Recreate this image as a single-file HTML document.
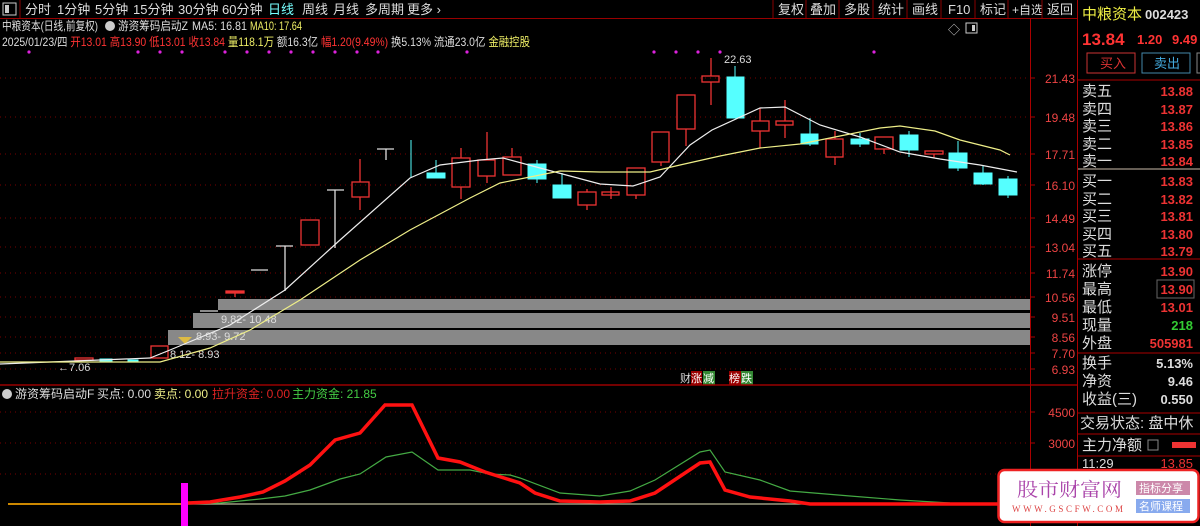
<!DOCTYPE html><html><head><meta charset="utf-8"><style>
body{margin:0;width:1200px;height:526px;background:#000;overflow:hidden;font-family:"Liberation Sans","Noto Sans CJK SC",sans-serif;position:relative}
</style></head><body>
<svg width="1200" height="526" style="position:absolute;left:0;top:0" font-family="Liberation Sans, Noto Sans CJK SC, sans-serif">
<rect x="3" y="3" width="13" height="12" fill="none" stroke="#ccc"/><rect x="5" y="5" width="4" height="8" fill="#ccc"/>
<line x1="20" y1="0" x2="20" y2="18" stroke="#800"/>
<g font-size="13" fill="#ddd">
<text x="25" y="14">分时</text><text x="57" y="14">1分钟</text><text x="95" y="14">5分钟</text><text x="133" y="14">15分钟</text><text x="178" y="14">30分钟</text><text x="222" y="14">60分钟</text><text x="268" y="14" fill="#7ff">日线</text><text x="302" y="14">周线</text><text x="333" y="14">月线</text><text x="365" y="14">多周期</text><text x="407" y="14">更多 ›</text>
<text x="778" y="14">复权</text><text x="810" y="14">叠加</text><text x="844" y="14">多股</text><text x="878" y="14">统计</text><text x="912" y="14">画线</text><text x="948" y="14">F10</text><text x="980" y="14">标记</text><text x="1012" y="14" font-size="12">+自选</text><text x="1047" y="14">返回</text>
</g>
<g stroke="#800"><line x1="773" y1="0" x2="773" y2="18"/><line x1="806" y1="0" x2="806" y2="18"/><line x1="839" y1="0" x2="839" y2="18"/><line x1="873" y1="0" x2="873" y2="18"/><line x1="907" y1="0" x2="907" y2="18"/><line x1="941" y1="0" x2="941" y2="18"/><line x1="975" y1="0" x2="975" y2="18"/><line x1="1008" y1="0" x2="1008" y2="18"/><line x1="1042" y1="0" x2="1042" y2="18"/></g>
<line x1="0" y1="18.5" x2="1077" y2="18.5" stroke="#900"/>
<g font-size="12">
<text x="2" y="30" fill="#ddd" textLength="96" lengthAdjust="spacingAndGlyphs">中粮资本(日线,前复权)</text><circle cx="110" cy="26" r="5" fill="#ccc"/><text x="118" y="30" fill="#ddd" textLength="70" lengthAdjust="spacingAndGlyphs">游资筹码启动Z</text><text x="192" y="30" fill="#ddd" textLength="55" lengthAdjust="spacingAndGlyphs">MA5: 16.81</text><text x="250" y="30" fill="#ee6" textLength="52" lengthAdjust="spacingAndGlyphs">MA10: 17.64</text>
<text x="2" y="46" font-size="12" textLength="528" lengthAdjust="spacingAndGlyphs"><tspan fill="#ddd">2025/01/23/四 </tspan><tspan fill="#f33">开13.01 高13.90 低13.01 收13.84 </tspan><tspan fill="#ee6">量118.1万 </tspan><tspan fill="#ddd">额16.3亿 </tspan><tspan fill="#f33">幅1.20(9.49%) </tspan><tspan fill="#ddd">换5.13% 流通23.0亿 </tspan><tspan fill="#ee6">金融控股</tspan></text>
</g>
<g fill="#d2d"><circle cx="29" cy="52" r="1.6"/><circle cx="138" cy="52" r="1.6"/><circle cx="160" cy="52" r="1.6"/><circle cx="182" cy="52" r="1.6"/><circle cx="225" cy="52" r="1.6"/><circle cx="247" cy="52" r="1.6"/><circle cx="269" cy="52" r="1.6"/><circle cx="291" cy="52" r="1.6"/><circle cx="313" cy="52" r="1.6"/><circle cx="335" cy="52" r="1.6"/><circle cx="357" cy="52" r="1.6"/><circle cx="378" cy="52" r="1.6"/><circle cx="467" cy="52" r="1.6"/><circle cx="654" cy="52" r="1.6"/><circle cx="676" cy="52" r="1.6"/><circle cx="698" cy="52" r="1.6"/><circle cx="720" cy="52" r="1.6"/><circle cx="874" cy="52" r="1.6"/></g>
<text x="948" y="34" fill="#ccc" font-size="12">◇</text><rect x="966" y="23" width="11" height="10" fill="none" stroke="#ccc"/><rect x="972" y="25" width="3" height="6" fill="#ccc"/>
<g stroke="#700" stroke-dasharray="1,4"><line x1="0" x2="1030" y1="78" y2="78"/><line x1="0" x2="1030" y1="117" y2="117"/><line x1="0" x2="1030" y1="154" y2="154"/><line x1="0" x2="1030" y1="185" y2="185"/><line x1="0" x2="1030" y1="218" y2="218"/><line x1="0" x2="1030" y1="247" y2="247"/><line x1="0" x2="1030" y1="273" y2="273"/><line x1="0" x2="1030" y1="297" y2="297"/><line x1="0" x2="1030" y1="317" y2="317"/><line x1="0" x2="1030" y1="337" y2="337"/><line x1="0" x2="1030" y1="353" y2="353"/><line x1="0" x2="1030" y1="369" y2="369"/>
<line x1="0" x2="1030" y1="412" y2="412"/><line x1="0" x2="1030" y1="443" y2="443"/><line x1="0" x2="1030" y1="474" y2="474"/></g>
<rect x="218" y="299" width="812" height="11" fill="#888"/><rect x="193" y="313" width="837" height="15" fill="#888"/><rect x="168" y="330" width="862" height="15" fill="#888"/>
<g font-size="11" fill="#ddd"><text x="221" y="323">9.82- 10.48</text><text x="196" y="340">8.93- 9.72</text><text x="170" y="358">8.12- 8.93</text><text x="58" y="371">←7.06</text><text x="724" y="63">22.63</text></g>
<path d="M178 337 L192 337 L185 344 Z" fill="#db4"/>
<g stroke="#e33" fill="none" stroke-width="1.3">
<rect x="75" y="358" width="18" height="2"/><rect x="151" y="346" width="17" height="12"/><rect x="226" y="291" width="18" height="2" fill="#e33"/><line x1="235" x2="235" y1="293" y2="297"/>
<rect x="301" y="220" width="18" height="25"/><rect x="352" y="182" width="17" height="15"/><line x1="360" x2="360" y1="159" y2="182"/><line x1="360" x2="360" y1="197" y2="210"/>
<rect x="452" y="158" width="18" height="29"/><line x1="461" x2="461" y1="148" y2="158"/><line x1="461" x2="461" y1="187" y2="199"/>
<rect x="478" y="160" width="17" height="16"/><line x1="487" x2="487" y1="132" y2="160"/><line x1="487" x2="487" y1="176" y2="183"/>
<rect x="503" y="157" width="18" height="18"/><line x1="512" x2="512" y1="148" y2="157"/>
<rect x="578" y="192" width="18" height="13"/><line x1="587" x2="587" y1="189" y2="192"/><line x1="587" x2="587" y1="205" y2="210"/>
<rect x="602" y="192" width="17" height="3"/><line x1="611" x2="611" y1="187" y2="199"/>
<rect x="627" y="168" width="18" height="27"/><line x1="636" x2="636" y1="195" y2="199"/>
<rect x="652" y="132" width="17" height="30"/><line x1="661" x2="661" y1="162" y2="166"/>
<rect x="677" y="95" width="18" height="34"/><line x1="686" x2="686" y1="129" y2="146"/>
<rect x="702" y="76" width="17" height="6"/><line x1="711" x2="711" y1="58" y2="76"/><line x1="711" x2="711" y1="82" y2="105"/>
<rect x="752" y="121" width="17" height="10"/><line x1="760" x2="760" y1="108" y2="121"/><line x1="760" x2="760" y1="131" y2="148"/>
<rect x="776" y="121" width="17" height="4"/><line x1="785" x2="785" y1="100" y2="121"/><line x1="785" x2="785" y1="125" y2="138"/>
<rect x="826" y="139" width="17" height="18"/><line x1="835" x2="835" y1="131" y2="139"/><line x1="835" x2="835" y1="157" y2="165"/>
<rect x="875" y="137" width="18" height="12"/><line x1="884" x2="884" y1="149" y2="154"/>
<rect x="925" y="151" width="18" height="3"/><line x1="934" x2="934" y1="154" y2="158"/>
</g>
<g fill="#5ff" stroke="#5ff">
<rect x="427" y="173" width="18" height="5"/><line x1="436" x2="436" y1="160" y2="173"/><line x1="411" x2="411" y1="140" y2="178"/>
<rect x="528" y="164" width="18" height="15"/><line x1="537" x2="537" y1="160" y2="183"/>
<rect x="553" y="185" width="18" height="13"/><line x1="562" x2="562" y1="173" y2="185"/>
<rect x="727" y="77" width="17" height="41"/><line x1="735" x2="735" y1="66" y2="77"/>
<rect x="801" y="134" width="17" height="10"/><line x1="810" x2="810" y1="118" y2="146"/>
<rect x="851" y="139" width="18" height="5"/><line x1="860" x2="860" y1="133" y2="147"/>
<rect x="900" y="135" width="18" height="15"/><line x1="909" x2="909" y1="131" y2="157"/>
<rect x="949" y="153" width="18" height="15"/><line x1="958" x2="958" y1="141" y2="171"/>
<rect x="974" y="173" width="18" height="11"/><line x1="983" x2="983" y1="166" y2="185"/>
<rect x="999" y="179" width="18" height="16"/><line x1="1008" x2="1008" y1="176" y2="198"/>
<rect x="100" y="359" width="12" height="2"/><rect x="128" y="360" width="10" height="2"/>
</g>
<g stroke="#ddd" stroke-width="1.3"><line x1="200" x2="218" y1="311" y2="311"/><line x1="251" x2="268" y1="270" y2="270"/><line x1="276" x2="293" y1="246" y2="246"/><line x1="285" x2="285" y1="246" y2="291"/><line x1="327" x2="344" y1="190" y2="190"/><line x1="335" x2="335" y1="190" y2="248"/><line x1="377" x2="394" y1="149" y2="149"/><line x1="386" x2="386" y1="149" y2="160"/></g>
<polyline fill="none" stroke="#eee" stroke-width="1.2" points="0,364 150,358 170,350 230,325 285,290 340,240 410,178 440,165 480,160 503,158 540,168 600,184 633,186 660,177 690,145 712,130 760,108 785,107 820,125 860,137 900,152 940,159 980,165 1017,172"/>
<polyline fill="none" stroke="#ee8" stroke-width="1.2" points="0,362 160,362 210,348 250,330 300,300 360,260 410,230 470,198 500,183 560,171 600,172 650,172 680,165 720,156 760,148 800,144 840,136 880,128 900,126 935,131 960,140 1000,150 1010,155"/>
<text x="680" y="382" font-size="11" fill="#ddd">财</text><rect x="691" y="371" width="11" height="14" fill="#900"/><text x="691" y="382" font-size="11" fill="#fff">涨</text><rect x="703" y="371" width="12" height="14" fill="#383"/><text x="703" y="382" font-size="11" fill="#fff">减</text>
<rect x="729" y="371" width="12" height="14" fill="#900"/><text x="729" y="382" font-size="11" fill="#fff">榜</text><rect x="741" y="371" width="12" height="14" fill="#383"/><text x="741" y="382" font-size="11" fill="#fff">跌</text>
<line x1="0" y1="385" x2="1077" y2="385" stroke="#900" stroke-width="1.5"/>
<circle cx="7" cy="394" r="5" fill="#ccc"/>
<g font-size="12"><text x="15" y="398" fill="#ddd">游资筹码启动F</text><text x="97" y="398" fill="#ddd">买点: 0.00</text><text x="154" y="398" fill="#ee8">卖点: 0.00</text><text x="212" y="398" fill="#d22">拉升资金: 0.00</text><text x="292" y="398" fill="#4c4">主力资金: 21.85</text></g>
<line x1="8" x2="1000" y1="504" y2="504" stroke="#bb9" stroke-width="1.2"/>
<line x1="8" x2="183" y1="504" y2="504" stroke="#c80" stroke-width="2"/>
<polyline fill="none" stroke="#4a4" stroke-width="1.2" points="183,504 220,503 260,499 285,496 310,490 340,479 360,474 386,457 412,452 438,470 470,470 490,474 510,475 520,478 560,493 600,496 630,491 655,480 700,452 710,450 725,472 760,480 790,491 850,496 900,500 950,503 1000,504"/>
<polyline fill="none" stroke="#f11" stroke-width="3.5" points="188,503 210,502 240,497 263,492 285,481 310,465 335,440 360,433 385,405 412,405 438,458 460,462 485,472 520,483 535,493 560,501 600,502 630,501 655,493 700,463 710,462 725,490 750,497 790,501 810,504 1000,504"/>
<rect x="181" y="483" width="7" height="43" fill="#f0f"/>
<line x1="1030.5" y1="18" x2="1030.5" y2="526" stroke="#a00"/>
<line x1="1077.5" y1="0" x2="1077.5" y2="526" stroke="#a00"/>
<g font-size="12" fill="#e44" text-anchor="end"><text x="1075" y="83">21.43</text><text x="1075" y="122">19.48</text><text x="1075" y="159">17.71</text><text x="1075" y="190">16.10</text><text x="1075" y="223">14.49</text><text x="1075" y="252">13.04</text><text x="1075" y="278">11.74</text><text x="1075" y="302">10.56</text><text x="1075" y="322">9.51</text><text x="1075" y="342">8.56</text><text x="1075" y="358">7.70</text><text x="1075" y="374">6.93</text><text x="1075" y="417">4500</text><text x="1075" y="448">3000</text></g>
<g stroke="#a00"><line x1="1030" x2="1035" y1="78" y2="78"/><line x1="1030" x2="1035" y1="117" y2="117"/><line x1="1030" x2="1035" y1="154" y2="154"/><line x1="1030" x2="1035" y1="185" y2="185"/><line x1="1030" x2="1035" y1="218" y2="218"/><line x1="1030" x2="1035" y1="247" y2="247"/><line x1="1030" x2="1035" y1="273" y2="273"/><line x1="1030" x2="1035" y1="297" y2="297"/><line x1="1030" x2="1035" y1="317" y2="317"/><line x1="1030" x2="1035" y1="337" y2="337"/><line x1="1030" x2="1035" y1="353" y2="353"/><line x1="1030" x2="1035" y1="369" y2="369"/><line x1="1030" x2="1035" y1="412" y2="412"/><line x1="1030" x2="1035" y1="443" y2="443"/></g>
<text x="1082" y="19" font-size="15" fill="#ee4">中粮资本</text><text x="1145" y="19" font-size="13" fill="#ddd" font-weight="bold">002423</text>
<text x="1082" y="45" font-size="17" fill="#f33" font-weight="bold">13.84</text><text x="1137" y="44" font-size="13" fill="#f33" font-weight="bold">1.20</text><text x="1172" y="44" font-size="13" fill="#f33" font-weight="bold">9.49</text>
<rect x="1087" y="53" width="48" height="20" fill="none" stroke="#c33"/><text x="1100" y="68" font-size="13" fill="#d33">买入</text>
<rect x="1142" y="53" width="48" height="20" fill="none" stroke="#48a"/><text x="1154" y="68" font-size="13" fill="#4ad">卖出</text>
<rect x="1197" y="53" width="6" height="20" fill="none" stroke="#888"/>
<line x1="1078" y1="80" x2="1200" y2="80" stroke="#a00"/>
<g font-size="15" fill="#ddd"><text x="1082" y="96">卖五</text><text x="1082" y="114">卖四</text><text x="1082" y="131">卖三</text><text x="1082" y="149">卖二</text><text x="1082" y="166">卖一</text><text x="1082" y="186">买一</text><text x="1082" y="204">买二</text><text x="1082" y="221">买三</text><text x="1082" y="239">买四</text><text x="1082" y="256">买五</text>
<text x="1082" y="276">涨停</text><text x="1082" y="294">最高</text><text x="1082" y="312">最低</text><text x="1082" y="330">现量</text><text x="1082" y="348">外盘</text><text x="1082" y="368">换手</text><text x="1082" y="386">净资</text><text x="1082" y="404">收益(三)</text><text x="1080" y="428">交易状态: 盘中休</text><text x="1082" y="450">主力净额</text></g>
<line x1="1078" y1="169" x2="1200" y2="169" stroke="#cba"/>
<line x1="1078" y1="259" x2="1200" y2="259" stroke="#a00"/><line x1="1078" y1="353" x2="1200" y2="353" stroke="#a00"/><line x1="1078" y1="413" x2="1200" y2="413" stroke="#a00"/><line x1="1078" y1="434" x2="1200" y2="434" stroke="#a00"/><line x1="1078" y1="456" x2="1200" y2="456" stroke="#a00"/>
<g font-size="13" fill="#e33" font-weight="bold" text-anchor="end"><text x="1193" y="96">13.88</text><text x="1193" y="114">13.87</text><text x="1193" y="131">13.86</text><text x="1193" y="149">13.85</text><text x="1193" y="166">13.84</text><text x="1193" y="186">13.83</text><text x="1193" y="204">13.82</text><text x="1193" y="221">13.81</text><text x="1193" y="239">13.80</text><text x="1193" y="256">13.79</text><text x="1193" y="276">13.90</text><text x="1193" y="294">13.90</text><text x="1193" y="312">13.01</text><text x="1193" y="330" fill="#3c3">218</text><text x="1193" y="348">505981</text><text x="1193" y="368" fill="#ddd">5.13%</text><text x="1193" y="386" fill="#ddd">9.46</text><text x="1193" y="404" fill="#ddd">0.550</text></g>
<rect x="1157" y="280" width="37" height="18" fill="none" stroke="#666"/>
<rect x="1148" y="440" width="10" height="10" fill="none" stroke="#888"/><rect x="1172" y="442" width="24" height="6" fill="#e33"/>
<text x="1082" y="468" font-size="13" fill="#ddd">11:29</text><text x="1193" y="468" font-size="13" fill="#e33" text-anchor="end">13.85</text>
<rect x="998.5" y="470" width="200" height="52" rx="6" fill="#fff" stroke="#e22" stroke-width="2.5"/>
<text x="1017" y="496" font-size="19" fill="#a4a" font-family="Liberation Serif, Noto Serif CJK SC, serif" textLength="105" lengthAdjust="spacingAndGlyphs">股市财富网</text>
<text x="1012" y="512" font-size="9" fill="#d44" font-family="Liberation Serif, serif" textLength="111" lengthAdjust="spacing">WWW.GSCFW.COM</text>
<rect x="1136" y="481" width="54" height="14" fill="#c8a"/><text x="1139" y="492" font-size="11" fill="#fff">指标分享</text>
<rect x="1136" y="499" width="54" height="14" fill="#8ae"/><text x="1139" y="510" font-size="11" fill="#fff">名师课程</text>
</svg>
</body></html>
